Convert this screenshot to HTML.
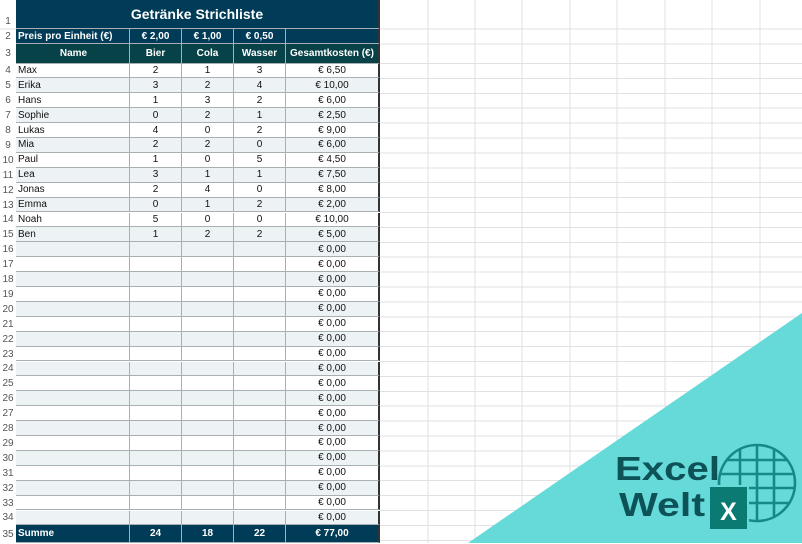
<!DOCTYPE html>
<html><head><meta charset="utf-8"><style>
*{margin:0;padding:0;box-sizing:border-box}
body{width:802px;height:543px;overflow:hidden;background:#fff;font-family:"Liberation Sans",Arial,sans-serif;font-size:10px;position:relative}
.bg{position:absolute;inset:0}
.grid{position:absolute;left:380px;top:63.5px;width:422px;height:480px;background:repeating-linear-gradient(to bottom,transparent 0,transparent 13.9px,#e1e1e1 13.9px,#e1e1e1 14.9px)}
.r{position:absolute;left:0;height:14.9px;display:flex;align-items:center}
.n{width:16px;text-align:center;color:#555;font-size:10px}
.c{height:100%;display:flex;align-items:center;justify-content:center;border-right:1px solid #a8b0b4;border-bottom:1px solid #a8b0b4;color:#111}
.a{width:114px;justify-content:flex-start;padding-left:2px}
.b{width:52px}.e{width:94px;border-right:2px solid #333}
.g .c{background:#edf2f4}
.w .c{background:#fff}
.h .c{color:#fff;font-weight:bold}
</style></head><body>
<div class="grid"></div>
<svg class="bg" width="802" height="543">
<g stroke="#e1e1e1" stroke-width="1">
<line x1="428" y1="0" x2="428" y2="543"/><line x1="475" y1="0" x2="475" y2="543"/><line x1="522" y1="0" x2="522" y2="543"/><line x1="570" y1="0" x2="570" y2="543"/><line x1="617" y1="0" x2="617" y2="543"/><line x1="665" y1="0" x2="665" y2="543"/><line x1="712" y1="0" x2="712" y2="543"/><line x1="760" y1="0" x2="760" y2="543"/>
<line x1="0" y1="29" x2="802" y2="29"/><line x1="380" y1="44" x2="802" y2="44"/><line x1="380" y1="63.5" x2="802" y2="63.5"/>
</g>
<polygon points="802,313 802,543 468,543" fill="#66d9d9"/>
<g stroke="#138a86" stroke-width="2.6" fill="none">
<circle cx="757" cy="483" r="38"/>
<line x1="740" y1="449" x2="740" y2="517"/><line x1="757" y1="445" x2="757" y2="521"/><line x1="774" y1="449" x2="774" y2="517"/>
<line x1="727" y1="460" x2="787" y2="460"/><line x1="720" y1="474" x2="794" y2="474"/><line x1="720" y1="488" x2="794" y2="488"/><line x1="727" y1="503" x2="789" y2="503"/>
</g>
<rect x="708" y="485" width="41" height="46" fill="#66d9d9"/>
<rect x="710" y="487" width="37" height="42" fill="#0b7a73"/>
<text x="728.5" y="520" fill="#fff" font-family="Liberation Sans,Arial,sans-serif" font-weight="bold" font-size="25" text-anchor="middle">X</text>
<g fill="#0c5257" font-family="Liberation Sans,Arial,sans-serif" font-weight="bold">
<text x="615" y="480" font-size="33" textLength="105" lengthAdjust="spacingAndGlyphs">Excel</text>
<text x="619" y="516" font-size="33" textLength="86" lengthAdjust="spacingAndGlyphs">Welt</text>
</g>
</svg>
<div class="r" style="top:0;height:29px"><div class="n" style="padding-top:14px">1</div><div class="c" style="width:364px;background:#003b57;color:#fff;font-weight:bold;font-size:14px;border-right:2px solid #333">Getränke Strichliste</div></div>
<div class="r h" style="top:29px;height:15px"><div class="n">2</div><div class="c a" style="background:#003b57">Preis pro Einheit (€)</div><div class="c b" style="background:#003b57">€ 2,00</div><div class="c b" style="background:#003b57">€ 1,00</div><div class="c b" style="background:#003b57">€ 0,50</div><div class="c e" style="background:#003b57"></div></div>
<div class="r h" style="top:44px;height:19.5px"><div class="n">3</div><div class="c a" style="background:#064248;justify-content:center">Name</div><div class="c b" style="background:#064248">Bier</div><div class="c b" style="background:#064248">Cola</div><div class="c b" style="background:#064248">Wasser</div><div class="c e" style="background:#064248">Gesamtkosten (€)</div></div>
<div class="r w" style="top:63.5px"><div class="n">4</div><div class="c a">Max</div><div class="c b">2</div><div class="c b">1</div><div class="c b">3</div><div class="c e">€ 6,50</div></div>
<div class="r g" style="top:78.4px"><div class="n">5</div><div class="c a">Erika</div><div class="c b">3</div><div class="c b">2</div><div class="c b">4</div><div class="c e">€ 10,00</div></div>
<div class="r w" style="top:93.3px"><div class="n">6</div><div class="c a">Hans</div><div class="c b">1</div><div class="c b">3</div><div class="c b">2</div><div class="c e">€ 6,00</div></div>
<div class="r g" style="top:108.2px"><div class="n">7</div><div class="c a">Sophie</div><div class="c b">0</div><div class="c b">2</div><div class="c b">1</div><div class="c e">€ 2,50</div></div>
<div class="r w" style="top:123.1px"><div class="n">8</div><div class="c a">Lukas</div><div class="c b">4</div><div class="c b">0</div><div class="c b">2</div><div class="c e">€ 9,00</div></div>
<div class="r g" style="top:138px"><div class="n">9</div><div class="c a">Mia</div><div class="c b">2</div><div class="c b">2</div><div class="c b">0</div><div class="c e">€ 6,00</div></div>
<div class="r w" style="top:152.9px"><div class="n">10</div><div class="c a">Paul</div><div class="c b">1</div><div class="c b">0</div><div class="c b">5</div><div class="c e">€ 4,50</div></div>
<div class="r g" style="top:167.8px"><div class="n">11</div><div class="c a">Lea</div><div class="c b">3</div><div class="c b">1</div><div class="c b">1</div><div class="c e">€ 7,50</div></div>
<div class="r w" style="top:182.7px"><div class="n">12</div><div class="c a">Jonas</div><div class="c b">2</div><div class="c b">4</div><div class="c b">0</div><div class="c e">€ 8,00</div></div>
<div class="r g" style="top:197.6px"><div class="n">13</div><div class="c a">Emma</div><div class="c b">0</div><div class="c b">1</div><div class="c b">2</div><div class="c e">€ 2,00</div></div>
<div class="r w" style="top:212.5px"><div class="n">14</div><div class="c a">Noah</div><div class="c b">5</div><div class="c b">0</div><div class="c b">0</div><div class="c e">€ 10,00</div></div>
<div class="r g" style="top:227.4px"><div class="n">15</div><div class="c a">Ben</div><div class="c b">1</div><div class="c b">2</div><div class="c b">2</div><div class="c e">€ 5,00</div></div>
<div class="r g" style="top:242.3px"><div class="n">16</div><div class="c a"></div><div class="c b"></div><div class="c b"></div><div class="c b"></div><div class="c e">€ 0,00</div></div>
<div class="r w" style="top:257.2px"><div class="n">17</div><div class="c a"></div><div class="c b"></div><div class="c b"></div><div class="c b"></div><div class="c e">€ 0,00</div></div>
<div class="r g" style="top:272.1px"><div class="n">18</div><div class="c a"></div><div class="c b"></div><div class="c b"></div><div class="c b"></div><div class="c e">€ 0,00</div></div>
<div class="r w" style="top:287px"><div class="n">19</div><div class="c a"></div><div class="c b"></div><div class="c b"></div><div class="c b"></div><div class="c e">€ 0,00</div></div>
<div class="r g" style="top:301.9px"><div class="n">20</div><div class="c a"></div><div class="c b"></div><div class="c b"></div><div class="c b"></div><div class="c e">€ 0,00</div></div>
<div class="r w" style="top:316.8px"><div class="n">21</div><div class="c a"></div><div class="c b"></div><div class="c b"></div><div class="c b"></div><div class="c e">€ 0,00</div></div>
<div class="r g" style="top:331.7px"><div class="n">22</div><div class="c a"></div><div class="c b"></div><div class="c b"></div><div class="c b"></div><div class="c e">€ 0,00</div></div>
<div class="r w" style="top:346.6px"><div class="n">23</div><div class="c a"></div><div class="c b"></div><div class="c b"></div><div class="c b"></div><div class="c e">€ 0,00</div></div>
<div class="r g" style="top:361.5px"><div class="n">24</div><div class="c a"></div><div class="c b"></div><div class="c b"></div><div class="c b"></div><div class="c e">€ 0,00</div></div>
<div class="r w" style="top:376.4px"><div class="n">25</div><div class="c a"></div><div class="c b"></div><div class="c b"></div><div class="c b"></div><div class="c e">€ 0,00</div></div>
<div class="r g" style="top:391.3px"><div class="n">26</div><div class="c a"></div><div class="c b"></div><div class="c b"></div><div class="c b"></div><div class="c e">€ 0,00</div></div>
<div class="r w" style="top:406.2px"><div class="n">27</div><div class="c a"></div><div class="c b"></div><div class="c b"></div><div class="c b"></div><div class="c e">€ 0,00</div></div>
<div class="r g" style="top:421.1px"><div class="n">28</div><div class="c a"></div><div class="c b"></div><div class="c b"></div><div class="c b"></div><div class="c e">€ 0,00</div></div>
<div class="r w" style="top:436px"><div class="n">29</div><div class="c a"></div><div class="c b"></div><div class="c b"></div><div class="c b"></div><div class="c e">€ 0,00</div></div>
<div class="r g" style="top:450.9px"><div class="n">30</div><div class="c a"></div><div class="c b"></div><div class="c b"></div><div class="c b"></div><div class="c e">€ 0,00</div></div>
<div class="r w" style="top:465.8px"><div class="n">31</div><div class="c a"></div><div class="c b"></div><div class="c b"></div><div class="c b"></div><div class="c e">€ 0,00</div></div>
<div class="r g" style="top:480.7px"><div class="n">32</div><div class="c a"></div><div class="c b"></div><div class="c b"></div><div class="c b"></div><div class="c e">€ 0,00</div></div>
<div class="r w" style="top:495.6px"><div class="n">33</div><div class="c a"></div><div class="c b"></div><div class="c b"></div><div class="c b"></div><div class="c e">€ 0,00</div></div>
<div class="r g" style="top:510.5px"><div class="n">34</div><div class="c a"></div><div class="c b"></div><div class="c b"></div><div class="c b"></div><div class="c e">€ 0,00</div></div>
<div class="r h" style="top:525.4px;height:17.6px"><div class="n">35</div><div class="c a" style="background:#003b57">Summe</div><div class="c b" style="background:#003b57">24</div><div class="c b" style="background:#003b57">18</div><div class="c b" style="background:#003b57">22</div><div class="c e" style="background:#003b57">€ 77,00</div></div>
</body></html>
